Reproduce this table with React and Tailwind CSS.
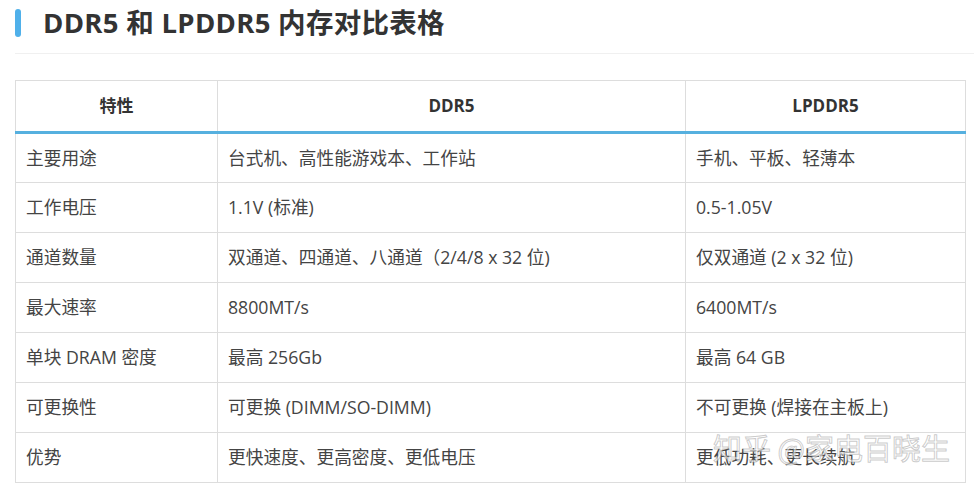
import React from 'react';

const rows = [
  ['主要用途', '台式机、高性能游戏本、工作站', '手机、平板、轻薄本'],
  ['工作电压', '1.1V (标准)', '0.5-1.05V'],
  ['通道数量', '双通道、四通道、八通道（2/4/8 x 32 位)', '仅双通道 (2 x 32 位)'],
  ['最大速率', '8800MT/s', '6400MT/s'],
  ['单块 DRAM 密度', '最高 256Gb', '最高 64 GB'],
  ['可更换性', '可更换 (DIMM/SO-DIMM)', '不可更换 (焊接在主板上)'],
  ['优势', '更快速度、更高密度、更低电压', '更低功耗、更长续航'],
];

const font = "font-['Open_Sans','Noto_Sans_CJK_SC',sans-serif]";

export default function App() {
  return (
    <div className={`relative w-[974px] h-[489px] bg-white overflow-hidden ${font}`}>
      {/* Title */}
      <div className="flex items-center h-[46px] pl-[15px]">
        <div className="w-[6px] h-[28px] rounded-full bg-[#4fb0ea]" />
        <h1 className="ml-[22px] text-[27.5px] leading-[28px] font-bold text-[#333] tracking-[0.3px]">
          DDR5 和 LPDDR5 内存对比表格
        </h1>
      </div>
      <div className="ml-[15px] mt-[7px] h-px bg-[#f0f0f0]" />

      {/* Table */}
      <div className="pl-[15px] pt-[26px]">
        <table className="border-collapse text-[17.7px] text-[#444]">
          <colgroup>
            <col className="w-[202px]" />
            <col className="w-[468px]" />
            <col className="w-[280px]" />
          </colgroup>
          <thead>
            <tr className="h-[52px]">
              {['特性', 'DDR5', 'LPDDR5'].map((h) => (
                <th key={h} className="border border-[#dddddd] border-b-[3px] border-b-[#56b0df] text-center font-bold text-[#333] text-[17px] p-0">
                  {h}
                </th>
              ))}
            </tr>
          </thead>
          <tbody>
            {rows.map((r) => (
              <tr key={r[0]} className="h-[50px]">
                {r.map((c, i) => (
                  <td key={i} className="border border-[#dddddd] px-[10px] py-0 whitespace-nowrap">
                    {c}
                  </td>
                ))}
              </tr>
            ))}
          </tbody>
        </table>
      </div>

      {/* Watermark */}
      <div className="absolute left-[713px] top-[427px] text-[29px] leading-[40px] text-[rgba(255,255,255,0.6)] [-webkit-text-stroke:1px_rgba(140,140,140,0.45)] font-['Noto_Sans_CJK_SC',sans-serif] whitespace-nowrap pointer-events-none">
        知乎 @家电百晓生
      </div>
    </div>
  );
}
